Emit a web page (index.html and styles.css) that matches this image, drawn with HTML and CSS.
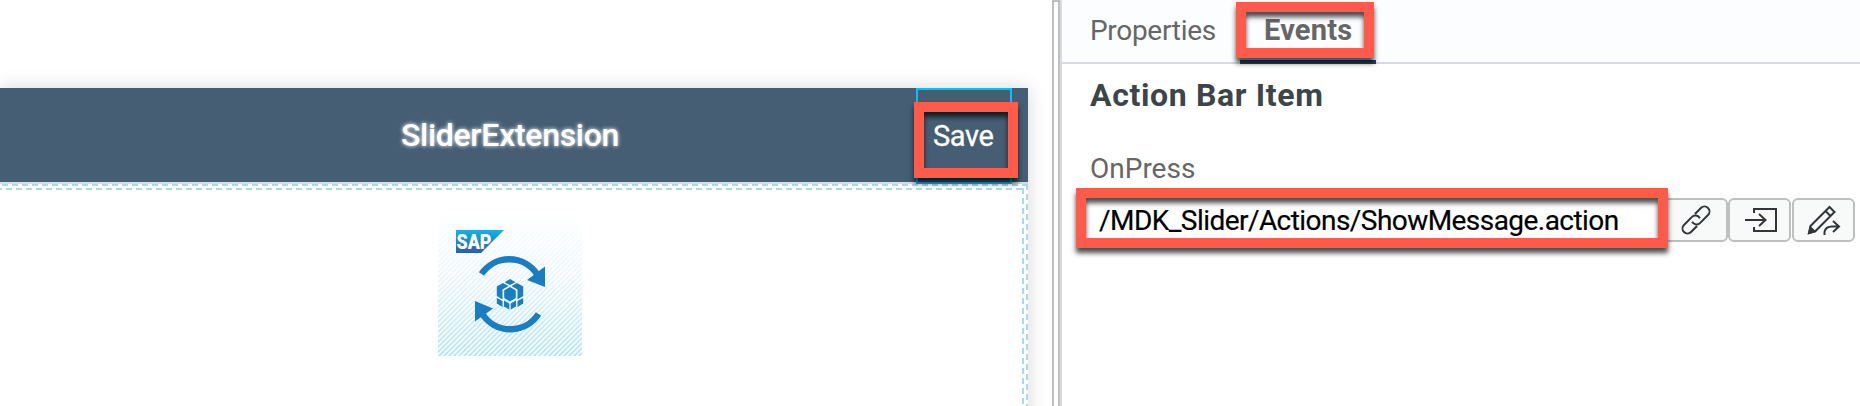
FILE: index.html
```html
<!DOCTYPE html>
<html lang="en">
<head>
<meta charset="utf-8">
<title>SliderExtension</title>
<link rel="stylesheet" href="styles.css">
</head>
<body>
<div class="app">
  <main class="canvas">
    <section class="page">
      <header class="bar">
        <h1 class="title">SliderExtension</h1>
        <div class="bar-item"><span class="save">Save</span><span class="mark mark-save"></span></div>
      </header>
      <div class="drop-zone">
        <svg class="inner-dash" width="1028" height="222">
          <path class="dash" d="M-8 1H1028" /><path class="dash" d="M1027 0V222" />
          <path class="dash" d="M0 5H1024" stroke-dashoffset="4" /><path class="dash" d="M1023 4V222" />
        </svg>
        <svg class="ext" width="144" height="144" viewBox="0 0 144 144">
          <defs>
            <linearGradient id="logo" x1="0" y1="0" x2="0" y2="1"><stop offset="0" stop-color="#18b1ea"/><stop offset="1" stop-color="#2c5caa"/></linearGradient>
            <linearGradient id="fade" x1="0" y1="0" x2="0" y2="1"><stop offset="0" stop-color="#a9dcf2" stop-opacity="0"/><stop offset=".5" stop-color="#a9dcf2" stop-opacity=".25"/><stop offset="1" stop-color="#a9dff5" stop-opacity=".85"/></linearGradient>
            <pattern id="lines" width="5" height="5" patternUnits="userSpaceOnUse"><path d="M-1 1L1 -1M-1 6L6 -1M4 6L6 4" stroke="#fff" stroke-width="1.6"/></pattern>
            <mask id="stripes"><rect width="144" height="144" fill="url(#lines)"/></mask>
          </defs>
          <rect width="144" height="144" fill="url(#fade)" opacity=".15"/>
          <rect width="144" height="144" fill="url(#fade)" mask="url(#stripes)"/>
          <path d="M18 18H66L43 41H18Z" fill="url(#logo)"/>
          <text class="sap" x="18.5" y="36.5" textLength="35" lengthAdjust="spacingAndGlyphs">SAP</text>
          <g fill="none" stroke="#187dc2" stroke-width="6.4">
            <path d="M43.5 62A33.500 33.500 0 0 1 99 62"/>
            <path d="M100.500 102A33.500 33.500 0 0 1 45 103"/>
          </g>
          <path d="M107 54.500V75L89 68ZM37 89V109.500L55 96.500Z" fill="#187dc2"/>
          <g fill="#187dc2">
            <path d="M72 67L77.500 70.200L72 73L66.500 70.200Z"/>
            <path d="M65 71L70.500 74L64.500 77.500V87.500L58.800 84V74.600Z"/>
            <path d="M79 71L73.500 74L79.500 77.500V87.500L85.200 84V74.600Z"/>
            <path d="M72 75L77.800 78.500V86L72 89.500L66.200 86V78.500Z"/>
            <path d="M58.800 86L64.500 89V95L58.800 91.500ZM85.200 86L79.500 89V95L85.200 91.500Z"/>
            <path d="M66 88.500L71.300 91.500V97.500L66 94.500ZM78 88.500L72.700 91.500V97.500L78 94.500Z"/>
          </g>
        </svg>
      </div>
    </section>
  </main>
  <div class="splitter"></div>
  <aside class="panel">
    <nav class="tabs">
      <span class="tab">Properties</span>
      <span class="tab active"><b class="events">Events</b><span class="mark mark-events"></span></span>
    </nav>
    <h2 class="heading">Action Bar Item</h2>
    <label class="label">OnPress</label>
    <div class="row">
      <div class="field"><span class="value">/MDK_Slider/Actions/ShowMessage.action</span><span class="mark mark-field"></span></div>
      <button class="btn"><svg width="32" height="32" viewBox="-16 -16 32 32"><g transform="rotate(-45)"><path d="M3.500 -5H12A5 5 0 0 1 12 5H1A5 5 0 0 1 -4 -1.500"/><path d="M-3.500 5H-12A5 5 0 0 1 -12 -5H-1A5 5 0 0 1 4 1.500"/></g></svg></button>
      <button class="btn"><svg width="34" height="32" viewBox="0 0 34 32"><path d="M11 9V5H33V27H11V23M2 16H22M16 10L22.500 16L16 22"/></svg></button>
      <button class="btn"><svg width="34" height="32" viewBox="0 0 34 32"><path d="M3.500 22L22.500 3L27.500 8L8.500 27L2 29ZM18.500 7L23.500 12"/><path d="M2 29L3.500 23.500L7.500 27.500Z" fill="#32363a"/><path d="M17.500 31V28Q18.500 22.500 25 22.500H32M26 17L32 22.500L26 28"/></svg></button>
    </div>
  </aside>
</div>
</body>
</html>
```
FILE: styles.css
```css
* { box-sizing: border-box; }
body { margin: 0; width: 1860px; height: 406px; overflow: hidden; background: #fff; font-family: Roboto, "Noto Sans", sans-serif; }
.app { display: flex; height: 406px; overflow: hidden; }
.canvas { width: 1052px; flex: none; padding-top: 88px; overflow: hidden; background: #fff; }
.page { width: 1028px; height: 340px; background: #fff; box-shadow: 0 0 18px rgba(0, 0, 0, .16); }
.bar { height: 94px; background: #455e73; display: grid; grid-template-columns: 916px 96px; }
.title { margin: 0; padding-left: 401px; font-size: 32px; font-weight: 500; line-height: 94px; color: #fff; letter-spacing: -.3px; white-space: nowrap; text-shadow: 0 0 4px #fff; }
.bar-item { position: relative; z-index: 1; height: 96px; border: 2px solid #00c2ff; padding-left: 15px; line-height: 92px; }
.save { color: #fff; font-size: 29px; letter-spacing: -.4px; -webkit-text-stroke: .3px #fff; }
.drop-zone { position: relative; height: 224px; border-top: 2px solid #d3dcea; padding: 28px 0 0 438px; }
.inner-dash { position: absolute; left: 0; top: 0; }
.dash { fill: none; stroke: #add8e6; stroke-width: 2; stroke-dasharray: 6 4; }
.ext { display: block; }
.sap { font: 900 21px Roboto, sans-serif; fill: #fff; }
.splitter { width: 8px; flex: none; border: 2px solid #bfbfbf; border-bottom: 0; }
.panel { flex: 1; border-left: 2px solid #d9d9e0; }
.tabs { height: 64px; display: flex; gap: 25px; padding-left: 28px; background: #fcfdff; border-bottom: 2px solid #d9dadf; color: #666; font-size: 28px; line-height: 61px; }
.tab { width: 125px; white-space: nowrap; letter-spacing: -.3px; }
.tab.active { position: relative; width: 136px; height: 64px; padding-left: 24px; border-bottom: 4px solid #1f4868; }
.events { font-size: 29px; font-weight: 700; letter-spacing: .2px; }
.heading { margin: 11px 0 0 28px; font-size: 32px; line-height: 41px; font-weight: 700; color: #3c4549; white-space: nowrap; letter-spacing: .65px; }
.label { display: block; margin: 33px 0 0 28px; font-size: 28px; line-height: 40px; color: #666; }
.row { display: flex; margin-top: 9px; padding-left: 22px; gap: 1px; }
.field { position: relative; width: 579px; height: 44px; padding-left: 15px; line-height: 46px; font-size: 28px; letter-spacing: -.55px; color: #000; white-space: nowrap; }
.value { -webkit-text-stroke: .2px #000; }
.btn { width: 63px; height: 44px; padding: 0; border: 2px solid #bfbfbf; border-radius: 6px; background: #f8faf9; display: flex; align-items: center; justify-content: center; }
.btn svg { fill: none; stroke: #32363a; stroke-width: 2; overflow: visible; }
.btn:first-of-type { width: 64px; margin-right: -1px; }
.mark { position: absolute; border: 10px solid #ff5a4a; box-shadow: 0 5px 5px rgba(0, 0, 0, .7), inset 0 5px 5px rgba(0, 0, 0, .7); }
.mark-save { left: -4px; top: 12px; width: 104px; height: 76px; }
.mark-events { left: -4px; top: 2px; width: 138px; height: 56px; }
.mark-field { left: -8px; top: -10px; width: 592px; height: 60px; }
```
